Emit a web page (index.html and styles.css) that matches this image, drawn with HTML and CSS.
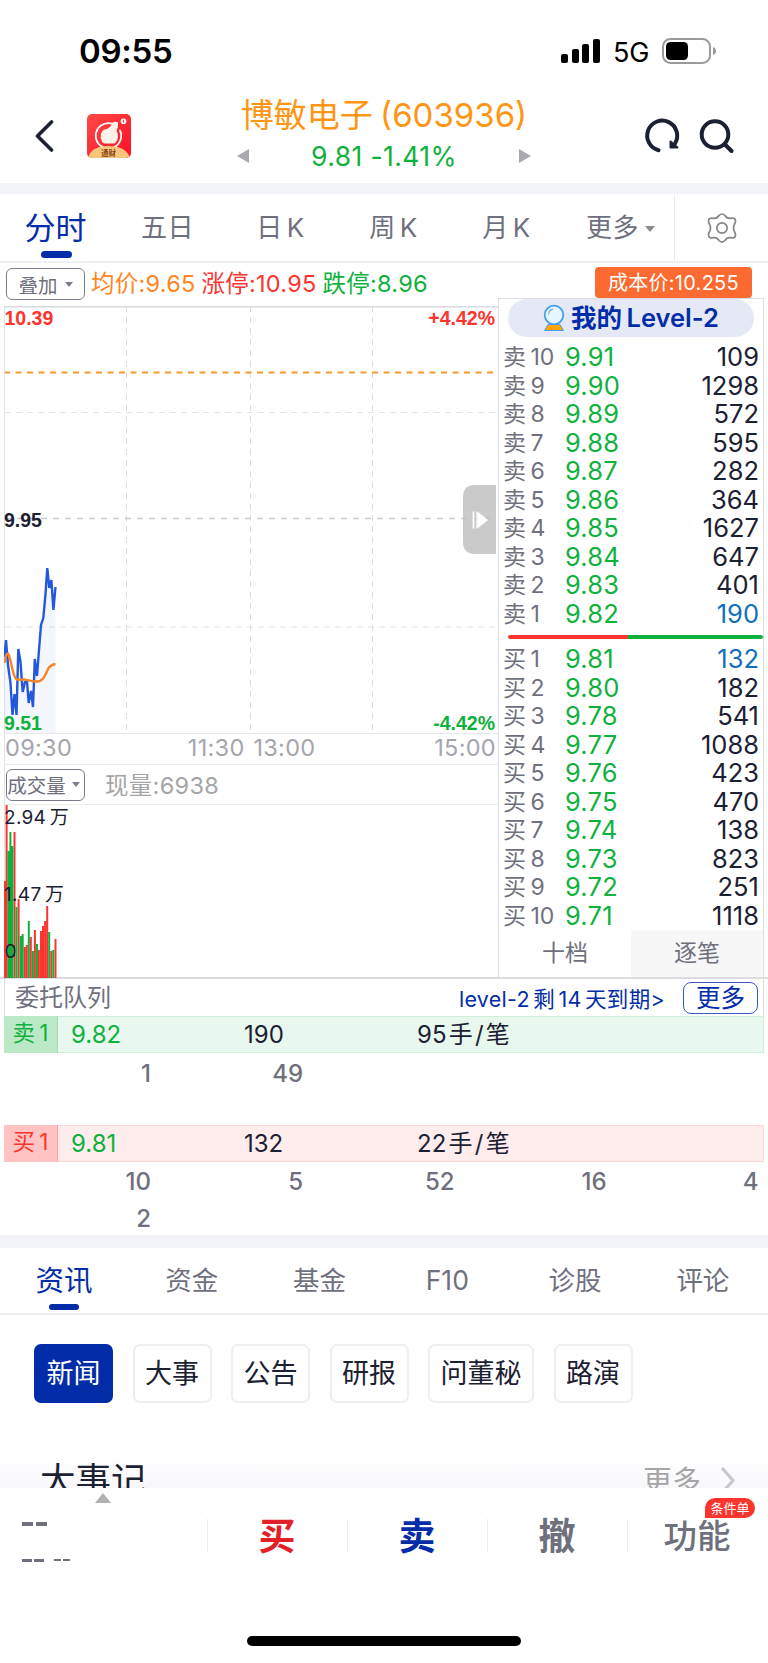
FILE: index.html
```html
<!DOCTYPE html>
<html lang="zh-CN">
<head>
<meta charset="utf-8">
<title>博敏电子 (603936)</title>
<link rel="stylesheet" href="styles.css">
</head>
<body>
<div class="app">
  <div class="status">
    <span class="clock">09:55</span>
    <svg class="signal" width="40" height="26" viewBox="0 0 40 26"><rect x="0" y="16" width="7" height="9" rx="2"/><rect x="11" y="11" width="7" height="14" rx="2"/><rect x="21" y="6" width="7" height="19" rx="2"/><rect x="32" y="1" width="7" height="24" rx="2"/></svg>
    <span class="net">5G</span>
    <svg class="battery" width="54" height="26" viewBox="0 0 54 26"><rect x="1" y="1" width="47" height="24" rx="7.5" fill="none" stroke="#9a9a9a" stroke-width="2"/><rect x="4" y="4" width="22" height="18" rx="4.5"/><path d="M51 9q3 1 3 4t-3 4z" fill="#9a9a9a"/></svg>
  </div>

  <header class="header">
    <svg class="back" width="20" height="34" viewBox="0 0 20 34"><path d="M17.500 3 3.500 17l14 14" fill="none" stroke="#1c2033" stroke-width="3.600" stroke-linecap="round" stroke-linejoin="round"/></svg>
    <svg class="logo" width="44" height="44" viewBox="0 0 44 44">
      <defs><linearGradient id="red" x1="0" y1="0" x2="1" y2="1"><stop offset="0" stop-color="#ff4a48"/><stop offset="1" stop-color="#fb1026"/></linearGradient><clipPath id="round"><rect width="44" height="44" rx="5"/></clipPath></defs>
      <g clip-path="url(#round)"><rect width="44" height="44" fill="url(#red)"/>
      <path d="M25 9.600A12.700 12.700 0 1 0 33 16.500" fill="none" stroke="#fff" stroke-width="1.800" stroke-linecap="round"/>
      <path d="M20 15q4-2 5.500-6.500 3-1.500 5.500 0 .5 5-1.500 8.500 1.500 2 1.500 5 0 5-3.500 7.500H18q-3.500-.5-3.500-4-1.500-2-.5-4-1-2 1-3.500 1-3 5-3z" fill="#fff2e8"/>
      <circle cx="36.500" cy="7.300" r="2.800" fill="#fff"/><path d="M36.500 5.800v3" stroke="#fb3040" stroke-width="1"/>
      <path d="M1 44q3-12 20.500-12T43 44z" fill="#f7c67b"/></g>
      <text x="21.500" y="41.500" text-anchor="middle" class="logo-text">通财</text>
    </svg>
    <div class="quote">
      <h1 class="stock">博敏电子 (603936)</h1>
      <div class="price"><i class="tri-left"></i><span>9.81 -1.41%</span><i class="tri-right"></i></div>
    </div>
    <svg class="reload" width="38" height="38" viewBox="0 0 38 38"><path d="M15.500 33.200A15 15 0 1 1 32 26.500" fill="none" stroke="#1c2033" stroke-width="4" stroke-linecap="round"/><path d="M27.500 24.500V30.500H34.500z" fill="#1c2033" stroke="#1c2033" stroke-width="2" stroke-linejoin="round"/></svg>
    <svg class="search" width="36" height="36" viewBox="0 0 36 36"><circle cx="16" cy="16.500" r="13.300" fill="none" stroke="#1c2033" stroke-width="4"/><path d="m26.500 27 6 6" stroke="#1c2033" stroke-width="4" stroke-linecap="round"/></svg>
  </header>

  <nav class="periods">
    <span class="period active">分时</span><span class="period">五日</span><span class="period">日 K</span><span class="period">周 K</span><span class="period">月 K</span><span class="period more">更多<i class="caret"></i></span>
    <span class="settings"><svg width="32" height="32" viewBox="0 0 32 32" fill="none" stroke="#858585" stroke-width="1.700" stroke-linejoin="round"><path d="M13 3.500Q16 .5 19 3.500q2 3.200 5.300 2.800 5.200-.8 5.200 2.700 0 1.500-1 3.200-2 3.800 0 7.600 1 1.700 1 3.200 0 3.500-5.200 2.700-3.300-.4-5.300 2.800-3 3-6 0-2-3.200-5.300-2.800-5.200.8-5.200-2.700 0-1.500 1-3.200 2-3.800 0-7.600-1-1.700-1-3.200 0-3.500 5.200-2.700 3.300.4 5.300-2.800z"/><circle cx="16" cy="16" r="5.200"/></svg></span>
  </nav>

  <div class="info">
    <span class="select">叠加<i class="caret"></i></span>
    <span class="orange">均价:9.65</span><span class="red">涨停:10.95</span><span class="green">跌停:8.96</span>
    <span class="cost">成本价:10.255</span>
  </div>

  <main class="market">
    <section class="charts">
      <svg class="chart" width="494" height="428" viewBox="4 306 494 428">
        <g stroke="#dadce0" stroke-width="1" stroke-dasharray="6 5"><path d="M126.500 306V733M250.500 306V733M372.500 306V733"/><path d="M5 412.500H497M5 627H497" stroke="#e3e4e8"/></g>
        <path d="M5 518.500H497" stroke="#c9ccd6" stroke-width="1.500" stroke-dasharray="6 6"/>
        <path d="M4 372.500H496" stroke="#f9982a" stroke-width="2" stroke-dasharray="6 5.500"/>
        <path d="M4.500 306V734" stroke="#dfe2e6"/><path d="M4 306.500H498" stroke="#d5dadf" stroke-width="2"/><path d="M4 733.500H498" stroke="#e8e9ec"/>
        <path fill="#3264e6" fill-opacity=".055" d="M4.500 654 6 640 11 681 12.500 714 14.500 693 16.500 714 18.500 648 20.500 662 22.500 693 25 682 27 682 29 702 31 691 33 705 35 660 37 679 41.500 625 43.500 618 47 568 49.500 587 51.500 579 53.500 609 55.500 587V733H4.500z"/>
        <path d="M4.500 657 6 640 8 665 10.500 683 12.500 715 14.500 694 16.500 715 18.300 649 20.500 662 22.700 692 25 682 27 681 28.700 703 31 691 33 707 34.800 659 37 676 39 650 41 625 43.300 618 45.500 594 47.300 568 49.300 588 51.400 580 53.400 610 55.500 587" fill="none" stroke="#2458dc" stroke-width="2.400"/>
        <path d="M4.500 663Q6 653 8 653.500C10.500 656 11.500 669 14.500 676 16 681 18 679.500 24 679.500 29 680 33 682 37 681.500 44 681 45.500 674 48.500 668 50.500 665.500 52 664.500 55.500 664" fill="none" stroke="#f88423" stroke-width="2.400"/>
        <g class="axis-label"><text x="4.500" y="324.500" class="f-red">10.39</text><text x="495" y="324.500" text-anchor="end" class="f-red">+4.42%</text><text x="4" y="527" class="f-dark">9.95</text><text x="4" y="730" class="f-green">9.51</text><text x="495" y="730" text-anchor="end" class="f-green">-4.42%</text></g>
        <path d="M496 485H475q-12 0-12 12V542q0 12 12 12H496z" fill="#b8b8b8" fill-opacity=".75"/><path d="M473.500 511.500v17" stroke="#fff" stroke-width="1.800"/><path d="M477 511.500v17" stroke="#fff" stroke-width="1.200"/><path d="M477.500 511.500 488 520 477.500 528.500z" fill="#fff"/>
      </svg>
      <div class="times"><span>09:30</span><span class="noon">11:30 13:00</span><span>15:00</span></div>
      <div class="volbar"><span class="select wide">成交量<i class="caret"></i></span><span class="now">现量:6938</span></div>
      <svg class="volume" width="494" height="173" viewBox="4 804 494 173">
        <path d="M4.500 804V977" stroke="#dfe2e6"/>
        <g stroke-width="2"><path stroke="#fb352e" d="M5 977V880M6.600 977V804M14.500 977V831M18.600 977V898M24.700 977V946M26.800 977V944M30.800 977V936M34.900 977V929M38.900 977V949M41 977V930M43 977V925M45.100 977V920M47.200 977V905M51.300 977V950M55.500 977V938"/><path stroke="#0fb13d" d="M8.400 977V850M10.400 977V831M12.400 977V845M16.500 977V906M20.700 977V935M22.700 977V933M28.800 977V920M32.900 977V950M37 977V943M49.200 977V931M53.300 977V949"/></g>
        <g class="vol-label"><text x="4" y="823">2.94 万</text><text x="4" y="900">1.47 万</text><text x="4.500" y="957">0</text></g>
      </svg>
    </section>

    <aside class="book">
      <div class="level"><svg width="22" height="28" viewBox="0 0 22 28"><circle cx="11" cy="11" r="9.300" fill="#e8f5ff" stroke="#3ea0ee" stroke-width="1.800"/><path d="M5.500 10.500Q6 6 10 5" fill="none" stroke="#7dbff4" stroke-width="1.300"/><path d="M5 20.500H17L20.500 26.500H1.500z" fill="#ffa400" stroke="#3ea0ee" stroke-width="1"/></svg>我的 Level-2</div>
      <ul class="rows">
        <li><b>卖 10</b><em>9.91</em><span>109</span></li><li><b>卖 9</b><em>9.90</em><span>1298</span></li><li><b>卖 8</b><em>9.89</em><span>572</span></li><li><b>卖 7</b><em>9.88</em><span>595</span></li><li><b>卖 6</b><em>9.87</em><span>282</span></li><li><b>卖 5</b><em>9.86</em><span>364</span></li><li><b>卖 4</b><em>9.85</em><span>1627</span></li><li><b>卖 3</b><em>9.84</em><span>647</span></li><li><b>卖 2</b><em>9.83</em><span>401</span></li><li><b>卖 1</b><em>9.82</em><span class="best">190</span></li>
      </ul>
      <div class="ratio"></div>
      <ul class="rows bids">
        <li><b>买 1</b><em>9.81</em><span class="best">132</span></li><li><b>买 2</b><em>9.80</em><span>182</span></li><li><b>买 3</b><em>9.78</em><span>541</span></li><li><b>买 4</b><em>9.77</em><span>1088</span></li><li><b>买 5</b><em>9.76</em><span>423</span></li><li><b>买 6</b><em>9.75</em><span>470</span></li><li><b>买 7</b><em>9.74</em><span>138</span></li><li><b>买 8</b><em>9.73</em><span>823</span></li><li><b>买 9</b><em>9.72</em><span>251</span></li><li><b>买 10</b><em>9.71</em><span>1118</span></li>
      </ul>
      <div class="modes"><span>十档</span><span class="off">逐笔</span></div>
    </aside>
  </main>

  <section class="queue">
    <div class="queue-head"><span class="queue-title">委托队列</span><span class="expire">level-2 剩 14 天到期&gt;</span><span class="more-btn">更多</span></div>
    <div class="order sell"><span class="tag">卖 1</span><span class="p">9.82</span><span class="q">190</span><span>95 手 / 笔</span></div>
    <div class="lots"><span>1</span><span>49</span></div>
    <div class="order buy"><span class="tag">买 1</span><span class="p">9.81</span><span class="q">132</span><span>22 手 / 笔</span></div>
    <div class="lots two"><span>10</span><span>5</span><span>52</span><span>16</span><span>4</span><span>2</span></div>
  </section>

  <nav class="topics"><span class="topic active">资讯</span><span class="topic">资金</span><span class="topic">基金</span><span class="topic">F10</span><span class="topic">诊股</span><span class="topic">评论</span></nav>
  <div class="chips"><span class="chip on">新闻</span><span class="chip">大事</span><span class="chip">公告</span><span class="chip">研报</span><span class="chip">问董秘</span><span class="chip">路演</span></div>
  <div class="events"><h2>大事记</h2><span class="events-more">更多<svg width="18" height="32" viewBox="0 0 18 32"><path d="M3 3 14 15.500 3 28" fill="none" stroke="#c8c8cb" stroke-width="3.200"/></svg></span></div>

  <footer class="trade">
    <div class="position"><i class="up"></i><span class="dash big"><i></i><i></i></span><span class="dash small"><i></i><i></i><i class="s"></i><i class="s"></i></span></div>
    <div class="act buy-act">买</div><div class="act sell-act">卖</div><div class="act">撤</div><div class="act fn">功能<span class="badge">条件单</span></div>
  </footer>
  <div class="home"></div>
</div>
</body>
</html>
```
FILE: styles.css
```css
* { box-sizing: border-box; }
body { margin: 0; background: #fff; font-family: Inter, "Noto Sans CJK SC", sans-serif; color: #1c2033; }
i, em, b { font-style: normal; font-weight: 400; }
h1, h2, ul { margin: 0; padding: 0; font-weight: 400; list-style: none; }
svg { display: block; flex: none; }
.app { width: 768px; height: 1663px; overflow: hidden; display: flex; flex-direction: column; }
.app > * { flex: none; }
.orange { color: #ff8522; } .red { color: #fb352e; } .green { color: #0fb13d; }

.status { height: 88px; padding: 14px 52px 0 79px; display: flex; align-items: center; color: #000; }
.clock { font-size: 33px; font-weight: 600; letter-spacing: -.3px; margin-right: auto; }
.net { font-size: 27px; letter-spacing: -.3px; margin: 2px 13px 0 12px; }

.header { height: 106px; border-bottom: 11px solid #f3f4fa; display: flex; align-items: flex-start; padding-left: 34px; }
.back { margin-top: 31px; }
.logo { margin: 26px 0 0 33px; }
.logo-text { font-size: 7.500px; font-weight: 700; fill: #8a4312; }
.quote { width: 294px; margin-left: 106px; text-align: center; }
.stock { color: #ff9514; font-size: 33px; line-height: 48px; margin: 3px -3px 0 -3px; white-space: nowrap; word-spacing: -2px; }
.price { color: #0fb13d; font-size: 26.500px; letter-spacing: .4px; line-height: 34px; display: flex; align-items: center; justify-content: space-between; }
.tri-left { border: 7.500px solid transparent; border-left: 0; border-right: 12px solid #a9a9b2; }
.tri-right { border: 7.500px solid transparent; border-right: 0; border-left: 12px solid #a9a9b2; }
.reload { margin: 29px 0 0 112px; }
.search { margin: 30px 0 0 18px; }

.caret { display: inline-block; border: 4px solid transparent; border-bottom: 0; border-top: 5px solid #7b7c89; }
.periods { height: 69px; border-bottom: 2px solid #eff0f2; display: flex; align-items: center; color: #6f707e; font-size: 26px; }
.period { position: relative; width: 113px; text-align: center; line-height: 66px; word-spacing: -4px; letter-spacing: .5px; white-space: nowrap; }
.period.active { width: 111px; color: #032da8; font-size: 31px; letter-spacing: 0; line-height: 62px; }
.period.active::after { content: ""; position: absolute; left: 41px; top: 54px; width: 31px; height: 7px; border-radius: 4px; background: #032da8; }
.period.more { width: 111px; padding-left: 4px; }
.more .caret { margin-left: 6px; vertical-align: 5px; border-width: 6px 5px 0; border-top-color: #8b8b90; }
.settings { align-self: stretch; flex: 1; border-left: 1px solid #e9eaed; display: flex; justify-content: center; align-items: center; }

.info { height: 43px; padding: 0 16px 0 6px; display: flex; align-items: center; font-size: 23.500px; letter-spacing: .25px; white-space: nowrap; }
.info .orange, .info .red, .info .green { padding-bottom: 6px; }
.info .orange { margin: 0 6px 0 6px; } .info .red { margin-right: 6px; }
.select { width: 79px; height: 32px; border: 1.500px solid #7b7c89; border-radius: 6px; display: flex; align-items: center; justify-content: center; gap: 7px; font-size: 19.500px; letter-spacing: 0; color: #6f707e; }
.info .select { margin-top: -1px; }
.select .caret { border-width: 5px 4px 0; }
.select.wide { gap: 6px; padding-right: 4px; }
.cost { align-self: flex-start; width: 157px; height: 31px; margin: 4px 0 0 auto; border-radius: 4px; background: #fb6a30; color: #fff; font-size: 20px; line-height: 32px; text-align: center; }

.market { height: 673px; display: flex; border-bottom: 2px solid #d9dbdf; }
.charts { width: 498px; padding-left: 4px; }
.axis-label { font: 700 19.500px "Liberation Sans", sans-serif; }
.f-red { fill: #fb352e; } .f-dark { fill: #1c2033; } .f-green { fill: #0fb13d; }
.times { height: 31px; display: flex; align-items: center; justify-content: space-between; color: #a5a5ae; font-size: 23.500px; letter-spacing: .3px; line-height: 28px; padding: 0 2px 3px 0; border-bottom: 1px solid #eceded; border-left: 1px solid #dfe2e6; }
.noon { margin-right: 3px; word-spacing: 2px; }
.volbar { height: 40px; display: flex; align-items: center; padding-left: 1px; border-bottom: 1px solid #eceded; border-left: 1px solid #dfe2e6; }
.now { margin-left: 20px; padding-bottom: 2px; color: #a5a5a5; font-size: 23.500px; letter-spacing: .3px; }
.vol-label { font-size: 19px; fill: #1c2033; word-spacing: -2px; letter-spacing: .3px; }

.book { width: 266px; margin-top: -8px; height: 680px; border: 1px solid #dcdde1; background: #fff; display: flex; flex-direction: column; position: relative; }
.level { height: 38px; margin: 0 9px; border-radius: 19px; background: #e5e9f6; color: #032da8; font-size: 25.500px; font-weight: 600; line-height: 38px; display: flex; align-items: center; justify-content: center; gap: 6px; word-spacing: -2px; white-space: nowrap; }
.rows { margin-top: 6px; }
.rows li { height: 28.500px; display: flex; align-items: center; font-size: 25.500px; line-height: 28px; padding: 0 4px; }
.rows b { width: 62px; font-size: 23px; color: #6f707e; word-spacing: -2px; white-space: nowrap; }
.rows em { color: #0fb13d; letter-spacing: .2px; }
.rows span { margin-left: auto; }
.rows .best { color: #136fbd; }
.rows.bids { margin-top: 6px; }
.ratio { flex: none; height: 4px; margin: 7px 0 0 9px; border-radius: 2px; background: linear-gradient(90deg, #fb352e 47%, #0fb13d 47%); }
.modes { margin-top: auto; height: 48px; display: flex; }
.modes span { flex: 1; text-align: center; font-size: 23px; line-height: 47px; color: #6f707e; }
.modes .off { background: #f7f7f7; }

.queue { height: 256px; margin: 0 4px; }
.queue-head { height: 37px; border-left: 1px solid #dcdde1; border-right: 1px solid #dcdde1; display: flex; align-items: center; padding: 0 5px 0 10px; white-space: nowrap; }
.queue-title { font-size: 24px; line-height: 36px; color: #6f707e; }
.expire { margin-left: auto; font-size: 21.500px; letter-spacing: .3px; color: #032da8; word-spacing: -3px; padding-bottom: 1px; }
.more-btn { width: 75px; height: 32px; margin: 1px 0 0 18px; border: 1.500px solid #3a5bbd; border-radius: 8px; color: #032da8; font-size: 24.500px; line-height: 30px; text-align: center; }
.order { height: 37px; display: flex; align-items: center; font-size: 24px; line-height: 34px; border: 1px solid; white-space: nowrap; word-spacing: -4.500px; }
.order .tag { align-self: stretch; width: 54px; text-align: center; font-size: 22.500px; word-spacing: -2px; border-right: 1px solid; margin: -1px 13px -1px -1px; }
.order .p { width: 173px; color: #0fb13d; } .order .q { width: 173px; }
.sell { background: #e9f8ee; border-color: #d0efd9; } .sell .tag { background: #bbe9c8; border-color: #9fdcb0; color: #0fb13d; }
.buy { background: #ffeded; border-color: #fdd6d5; } .buy .tag { background: #fec3c2; border-color: #f8a9a7; color: #fb352e; }
.lots { height: 72px; display: grid; grid-template-columns: 147px 152px 151.500px 152px 152px; grid-auto-rows: 37px; padding-top: 2px; font-size: 24px; font-weight: 500; color: #6f707e; text-align: right; line-height: 37px; }
.lots.two { padding-top: 1px; }

.topics { height: 80px; border-top: 13px solid #f3f4fa; border-bottom: 2px solid #eff0f2; display: flex; color: #6f707e; font-size: 26.500px; }
.topic { position: relative; width: 127.800px; text-align: center; line-height: 65px; }
.topic.active { color: #032da8; font-size: 28.500px; }
.topic.active::after { content: ""; position: absolute; left: 49px; top: 56px; width: 30px; height: 6px; border-radius: 3px; background: #032da8; }
.chips { height: 59px; margin: 29px 0 0 34px; display: flex; gap: 19.500px; font-size: 27px; }
.chip { border: 2px solid #efeff1; border-radius: 7px; line-height: 55px; width: 79px; text-align: center; white-space: nowrap; display: flex; justify-content: center; }
.chip:nth-child(5) { width: 106px; }
.chip.on { background: #032da8; border-color: #032da8; color: #fff; }
.events { height: 85px; padding: 53px 31px 0 40px; overflow: hidden; display: flex; justify-content: space-between; background: linear-gradient(#fff 50px, #f8f8fc); }
h2 { font-size: 35.500px; line-height: 50px; }
.events-more { display: flex; gap: 18px; font-size: 29px; color: #a5a5a5; line-height: 52px; }
.events-more svg { margin-top: 9px; }
.trade { height: 148px; display: flex; background: #fff; }
.position { width: 207px; position: relative; display: flex; flex-direction: column; padding-left: 22px; }
.up { width: 0; margin: 5px 0 0 73px; border: 8px solid transparent; border-top: 0; border-bottom: 10px solid #b2b2b2; }
.dash { display: flex; gap: 3px; }
.dash i { height: 4px; width: 11px; background: #6f707e; }
.dash.big { margin-top: 19px; }
.dash.small { margin-top: 33px; gap: 2px; } .dash.small i { width: 10px; height: 3px; } .dash.small .s { width: 7px; height: 2px; } .dash.small .s:nth-child(3) { margin-left: 8px; }
.act { position: relative; width: 140px; padding-top: 31px; font-size: 37px; font-weight: 600; line-height: 35px; height: 64px; text-align: center; color: #6f707e; background: linear-gradient(#ededf2, #ededf2) 0 31px / 1px 33px no-repeat; }
.buy-act { color: #e12128; } .sell-act { color: #032da8; }
.fn { font-size: 33.500px; font-weight: 500; }
.badge { position: absolute; left: 78px; top: 10px; width: 50px; height: 20px; border-radius: 10px 10px 10px 0; background: #fb352e; color: #fff; font-size: 13px; line-height: 20px; font-weight: 400; }
.home { width: 274px; height: 10px; margin: 0 0 0 247px; border-radius: 5px; background: #000; }
```
